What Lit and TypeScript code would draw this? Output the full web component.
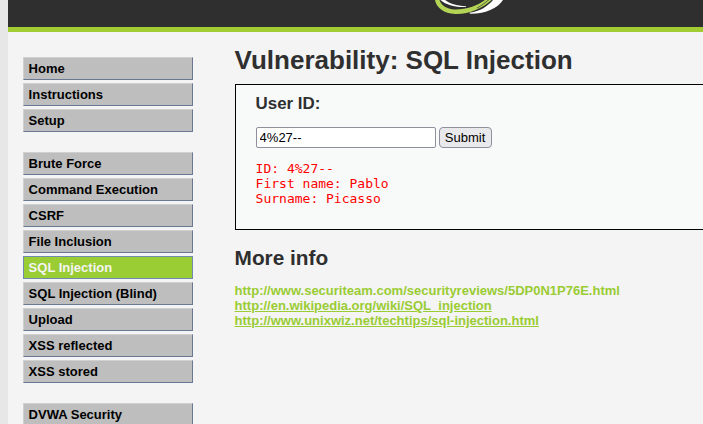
import { LitElement, html, css } from "lit";
import { customElement } from "lit/decorators.js";
import { classMap } from "lit/directives/class-map.js";

const MENU = [
  ["Home", "Instructions", "Setup"],
  [
    "Brute Force",
    "Command Execution",
    "CSRF",
    "File Inclusion",
    "SQL Injection",
    "SQL Injection (Blind)",
    "Upload",
    "XSS reflected",
    "XSS stored",
  ],
  ["DVWA Security"],
];

const LINKS = [
  { url: "http://www.securiteam.com/securityreviews/5DP0N1P76E.html", plain: true },
  { url: "http://en.wikipedia.org/wiki/SQL_injection", plain: false },
  { url: "http://www.unixwiz.net/techtips/sql-injection.html", plain: false },
];

@customElement("app-root")
export class AppRoot extends LitElement {
  static styles = css`
    :host {
      display: block;
      box-sizing: border-box;
      height: 424px;
      padding-left: 8px;
      overflow: hidden;
      background: #e7e7e7;
      color: #2f2f2f;
      font: 13px/15px Arial, "Liberation Sans", sans-serif;
    }
    .container {
      height: 100%;
      overflow: hidden;
      background: #f4f4f4;
    }
    .header {
      box-sizing: border-box;
      height: 32px;
      padding-left: 412px;
      background: #2f2f2f;
      border-bottom: 5px solid #a1cc33;
    }
    .logo {
      display: block;
    }
    .columns {
      display: flex;
    }
    .menu {
      flex: none;
      width: 170px;
      padding: 25px 0 0 15px;
    }
    .group {
      list-style: none;
      margin: 0 0 20px;
      padding: 0;
      display: grid;
      gap: 3px;
    }
    .item {
      box-sizing: border-box;
      height: 23px;
      padding: 3px 4.6px;
      border: 1px solid;
      border-color: #d0d0d0 #6b7894 #6b7894 #d0d0d0;
      background: #bebebe;
      color: #000;
      font-weight: bold;
    }
    .selected {
      background: #9acc33;
      border-color: #6f8bae;
      color: #f4f4f4;
    }
    .body {
      flex: none;
      width: 560px;
      padding: 13px 0 0 41.6px;
    }
    h1,
    h2,
    h3 {
      margin: 0;
      font-weight: bold;
    }
    h1 {
      font-size: 26px;
      line-height: 30px;
    }
    .box {
      box-sizing: border-box;
      height: 146px;
      margin-top: 9px;
      padding: 9px 20px 0;
      border: 1px solid #000;
      background: #f8fafa;
    }
    h3 {
      font-size: 16.9px;
      line-height: 20px;
    }
    .form {
      display: flex;
      gap: 3px;
      margin-top: 13px;
    }
    .field,
    .submit {
      box-sizing: border-box;
      height: 21px;
      margin: 0;
      border: 1px solid #8f8f9d;
      color: #000;
      font: 13px "Liberation Sans", Arial, sans-serif;
    }
    .field {
      width: 180px;
      padding: 1px 3px;
      border-radius: 2px;
      background: #fff;
    }
    .submit {
      width: 53px;
      padding: 0;
      border-radius: 4px;
      background: #e9e9ed;
    }
    pre {
      margin: 13px 0 0;
      color: #f00;
      font: 13px/15px "DejaVu Sans Mono", monospace;
    }
    h2 {
      margin-top: 16px;
      font-size: 20.8px;
      line-height: 24px;
    }
    .links {
      list-style: none;
      margin: 13px 0 0;
      padding: 0;
    }
    .link {
      color: #9acc33;
      font-weight: bold;
      text-decoration: underline;
    }
    .plain {
      text-decoration: none;
    }
  `;

  render() {
    return html`
      <div class="container">
        <div class="header">
          <svg class="logo" width="100" height="27" viewBox="0 0 100 27">
            <path fill="#fff" d="M25 0C30 3.500 36 5.800 46 6.200V6.900C36 7.600 27 5.500 20.500 0Z" />
            <path fill="#fff" d="M73 0H83C78 8 66 14 50 13.800L49.500 12.800C60 11.500 68 6 73 0Z" />
            <path fill="#b4d455" d="M15 0H19.500C21 5 26 9 35 9.500C46 9.700 57 6 65 0H71.500C62 8.500 49 14.500 35 14C24 13.500 16.500 8 15 0Z" />
            <path fill="none" stroke="#2f2f2f" stroke-width="0.7" d="M69 -0.500C65 3 61 6 57 8" />
          </svg>
        </div>
        <div class="columns">
          <nav class="menu">
            ${MENU.map(
              (group) => html`<ul class="group">
                ${group.map(
                  (label) =>
                    html`<li class=${classMap({ item: true, selected: label === "SQL Injection" })}>${label}</li>`
                )}
              </ul>`
            )}
          </nav>
          <main class="body">
            <h1>Vulnerability: SQL Injection</h1>
            <section class="box">
              <h3>User ID:</h3>
              <div class="form">
                <input class="field" type="text" .value=${"4%27--"} />
                <button class="submit" type="button">Submit</button>
              </div>
              <pre>${"ID: 4%27--\nFirst name: Pablo\nSurname: Picasso"}</pre>
            </section>
            <h2>More info</h2>
            <ul class="links">
              ${LINKS.map(
                (l) => html`<li><a class=${classMap({ link: true, plain: l.plain })} href=${l.url}>${l.url}</a></li>`
              )}
            </ul>
          </main>
        </div>
      </div>
    `;
  }
}
